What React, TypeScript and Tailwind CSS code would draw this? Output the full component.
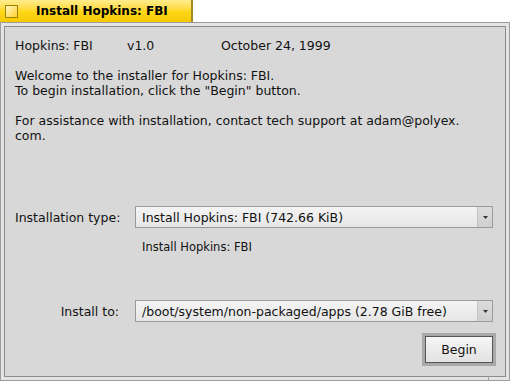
import React from "react";

const Menu: React.FC<{ label: string }> = ({ label }) => (
  <div className="flex h-[22px] w-[358px] border border-[#9a9a9a] bg-gradient-to-b from-[#f4f4f4] to-[#e6e6e6]">
    <div className="flex flex-1 items-center pl-[6px] text-[12.5px] text-[#111]">{label}</div>
    <div className="flex w-[15px] items-center justify-center border-l border-[#c4c4c4] bg-gradient-to-b from-[#dcdcdc] to-[#cfcfcf]">
      <svg width="5" height="3" viewBox="0 0 5 3">
        <path d="M0 0h5L2.5 3z" fill="#333" />
      </svg>
    </div>
  </div>
);

export default function App() {
  return (
    <div
      className="relative h-[382px] w-[511px] bg-white"
      style={{ fontFamily: '"DejaVu Sans", sans-serif' }}
    >
      {/* title tab */}
      <div className="flex h-[22px] w-[193px] items-center border-r-2 border-[#a08a2a] bg-gradient-to-b from-[#ffec8c] via-[#ffd81a] to-[#f5c800] pl-[5px]">
        <div className="h-[13px] w-[13px] border border-[#9b8200] bg-gradient-to-br from-[#fff6b8] to-[#ffd000]" />
        <span className="ml-[18px] text-[12px] font-bold text-black">Install Hopkins: FBI</span>
      </div>

      {/* window frame */}
      <div className="h-[359px] w-[510px] border border-[#9c9c9c] bg-[#e4e4e4] p-[3px]">
        <div className="flex h-full w-full flex-col border border-[#8c8c8c] bg-[#d8d8d8] pl-[10px] pr-[9px] pt-[11px] text-[12.5px] leading-[15px] text-[#111]">
          <div className="flex">
            <span className="w-[112px]">Hopkins: FBI</span>
            <span className="w-[94px]">v1.0</span>
            <span>October 24, 1999</span>
          </div>
          <div className="mt-[15px]">Welcome to the installer for Hopkins: FBI.</div>
          <div>To begin installation, click the "Begin" button.</div>
          <div className="mt-[15px]">
            For assistance with installation, contact tech support at adam@polyex.
            <br />
            com.
          </div>

          <div className="mt-[63px] flex items-center">
            <span className="w-[120px]">Installation type:</span>
            <Menu label="Install Hopkins: FBI (742.66 KiB)" />
          </div>
          <div className="ml-[127px] mt-[13px] text-[11.5px] leading-[13px]">Install Hopkins: FBI</div>

          <div className="mt-[46px] flex items-center">
            <span className="w-[104px] text-right">Install to:</span>
            <span className="w-[16px]" />
            <Menu label="/boot/system/non-packaged/apps (2.78 GiB free)" />
          </div>

          <div className="mt-[11px] flex justify-end">
            <div className="border-[3px] border-[#a9a9a9]">
              <button className="flex h-[27px] w-[68px] items-center justify-center border border-[#555] bg-gradient-to-b from-[#f6f6f6] to-[#e2e2e2] text-[12.5px] text-[#111]">
                Begin
              </button>
            </div>
          </div>
        </div>
      </div>
      <div className="absolute left-[488px] top-[376px] h-[5px] w-px bg-[#9c9c9c]" />
    </div>
  );
}
